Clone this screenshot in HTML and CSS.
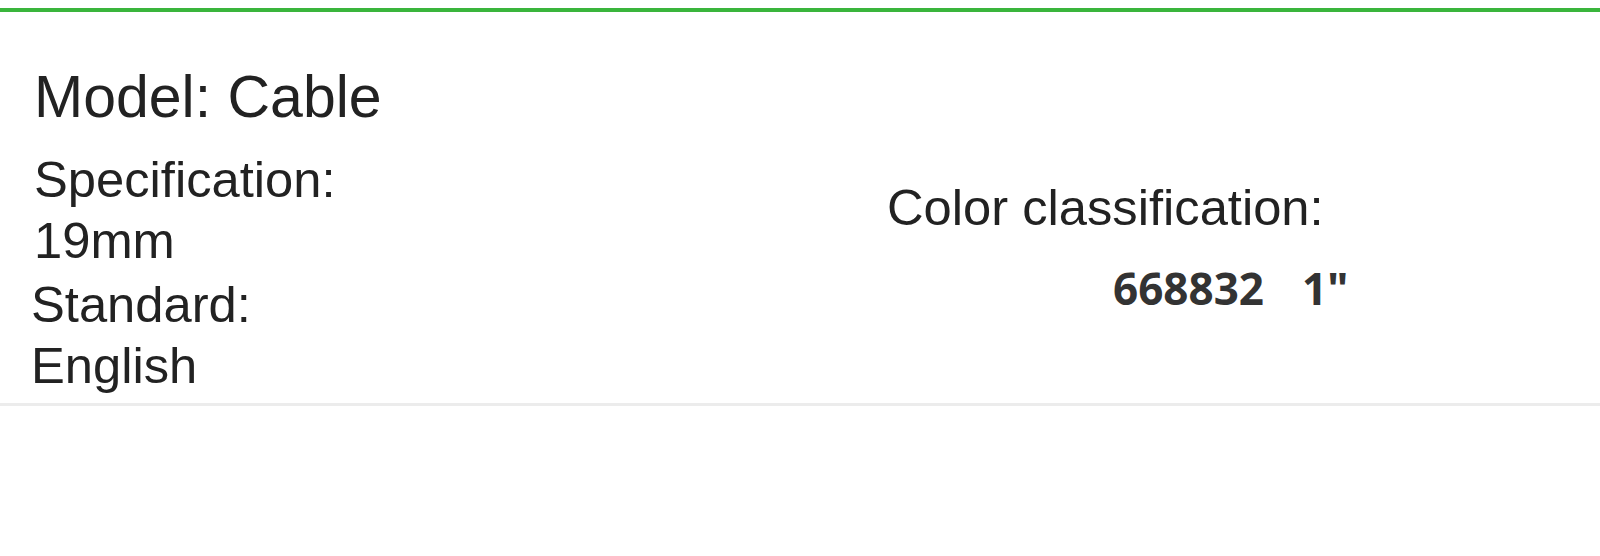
FILE: index.html
```html
<!DOCTYPE html>
<html>
<head>
<title>Cable</title>
<link rel="stylesheet" href="styles.css">
</head>
<body>

<div class="topline"></div>

<div class="panel">
  <h1 class="model">Model: Cable</h1>
  <div class="row">
    <div class="left">
      <div class="spec">
        <p>Specification:</p>
        <p>19mm</p>
      </div>
      <div class="std">
        <p>Standard:</p>
        <p>English</p>
      </div>
    </div>
    <div class="right">
      <p class="label">Color classification:</p>
      <p class="value"><span>668832</span><span class="size">1"</span></p>
    </div>
  </div>
</div>

</body>
</html>
```

FILE: styles.css
```css
body { margin: 0; background: #fff; color: #222;
font-family: "Liberation Sans", Arial, sans-serif; }
p { margin: 0; }

.topline { margin-top: 8px; height: 4px; background: #3ab53c; }

.panel { padding: 52px 0 7px 34px; border-bottom: 3px solid #ececec; }

h1.model { margin: 0; font-size: 59px; line-height: 66px; font-weight: normal; }

.row { display: flex; margin-top: 19px; }
.left { width: 853px; font-size: 50.7px; line-height: 61px; }
.std { margin-top: 3px; margin-left: -3px; }

.right { margin-top: 28px; }
.label { font-size: 50.7px; line-height: 61px; }
.value { margin-top: 21px; padding-left: 226px;
font-family: "Noto Sans", sans-serif; font-weight: bold; font-size: 44px; line-height: 58px; color: #333; }
.value .size { margin-left: 38px; }
```
